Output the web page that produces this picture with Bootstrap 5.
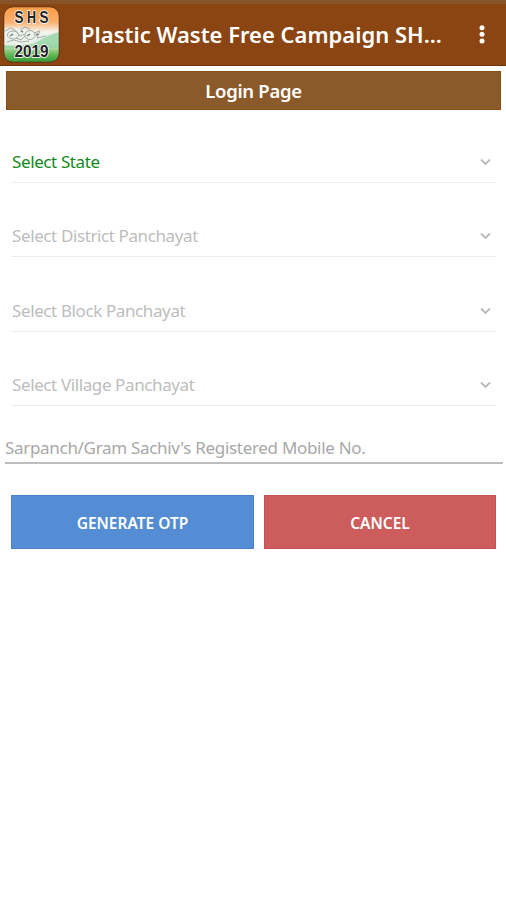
<!DOCTYPE html>
<html lang="en">
<head>
<meta charset="utf-8">
<meta name="viewport" content="width=device-width, initial-scale=1">
<title>Plastic Waste Free Campaign</title>
<link href="https://cdn.jsdelivr.net/npm/bootstrap@5.3.0/dist/css/bootstrap.min.css" rel="stylesheet">
<style>
body { font-family: "Noto Sans", "Open Sans", sans-serif; background: #fff; overflow-x: hidden; }
.app-bar { height: 66px; background: #8b4513; border-top: 4px solid #88552b; border-bottom: 1px solid #70340a; padding: 0 16px 2px 3px; }
.app-logo { width: 57px; height: 57px; margin-top: 2px; }
.app-title { font-size: 22px; font-weight: 600; line-height: 30px; margin-left: 21px; letter-spacing: 0; }
.page-head { height: 39px; margin: 5px 5px 0 6px; padding-top: 2px; background: #8b5a2b; border: 1px solid #87500f; font-size: 18.5px; font-weight: 600; letter-spacing: -.3px; }
.picker-list { margin: -2px 10px 0 11px; }
.picker { height: 74.5px; border: 0; border-bottom: 1.5px solid #ececec; background: none; color: #bdbdbd; font-size: 17px; line-height: 24px; padding: 0 4px 8px 1px; }
.picker-active { color: #128a1b; }
.picker span { letter-spacing: -.39px; }
.mobile-field { height: 58px; margin: 0 3px 0 5px; padding: 26px 0 0 0; border: 0; border-bottom: 2px solid #bdbdbd; border-radius: 0; font-size: 17px; background: none; }
.mobile-field::placeholder { color: #a8a8a8; opacity: 1; letter-spacing: -.31px; }
.actions { margin: 31px 10px 0 11px; gap: 10px; }
.act { height: 54px; border-radius: 0; color: #fff; font-size: 15.5px; font-weight: 600; padding: 3px 0 0; }
.act-otp { width: 243px; background: #548dd4; border: 1px solid #4a82cc; }
.act-cancel { background: #cd5c5c; border: 1px solid #c75252; }
</style>
</head>
<body>
<header class="app-bar d-flex align-items-center text-white">
  <svg class="app-logo flex-shrink-0" viewBox="0 0 57 57" aria-label="SHS 2019">
    <defs>
      <linearGradient id="flag" x1="0" y1="0" x2="0" y2="1">
        <stop offset="0" stop-color="#ff9b42"/><stop offset=".28" stop-color="#fbb070"/>
        <stop offset=".45" stop-color="#f5f3ec"/><stop offset=".65" stop-color="#e4f2e0"/>
        <stop offset=".85" stop-color="#65b957"/><stop offset="1" stop-color="#2d9635"/>
      </linearGradient>
      <clipPath id="tile"><rect x="1" y="1" width="55" height="55" rx="9"/></clipPath>
    </defs>
    <g clip-path="url(#tile)">
      <rect width="57" height="57" fill="url(#flag)"/>
      <path d="M0 39Q17 42 31 35Q42 28 57 26V42H0Z" fill="#8bd1a0" opacity=".75"/>
      <path d="M0 23Q15 19 28 25T57 25L43 31L30 38L0 39Z" fill="#edf1ec" opacity=".85"/>
      <g fill="none" stroke="#a3ada7" stroke-width="1">
        <ellipse cx="10" cy="29" rx="5.5" ry="4"/><ellipse cx="27" cy="29" rx="5" ry="4.5"/>
        <path d="M2 25l6-3 5 3 4 5 5-2M17 24l5-3 5 2M31 27l6-2-3 7 9-2M4 36l7-2 7 2 8-1M13 32l5 2 4-4"/>
      </g>
      <path d="M7 30l3-2M24 30l3-2M33 29l2-1M18 25l2 1" stroke="#707c76" stroke-width="1.5"/>
    </g>
    <rect x=".8" y=".8" width="55.4" height="55.4" rx="9" fill="none" stroke="#5b3519" stroke-width=".9"/>
    <g font-family="Liberation Sans, sans-serif" font-weight="700" fill="#222" stroke="#fff" stroke-width="1.6" paint-order="stroke" text-anchor="middle">
      <text x="16" y="17" font-size="16" textLength="9" lengthAdjust="spacingAndGlyphs">S</text>
      <text x="28.5" y="17" font-size="16" textLength="9" lengthAdjust="spacingAndGlyphs">H</text>
      <text x="41" y="17" font-size="16" textLength="9" lengthAdjust="spacingAndGlyphs">S</text>
      <text x="28.5" y="50.5" font-size="16" textLength="34" lengthAdjust="spacingAndGlyphs">2019</text>
    </g>
  </svg>
  <h1 class="app-title mb-0 text-nowrap">Plastic Waste Free Campaign SH...</h1>
  <svg class="ms-auto flex-shrink-0" width="16" height="24" viewBox="0 0 16 24" fill="#fff" aria-label="Menu"><circle cx="8" cy="5.7" r="2.5"/><circle cx="8" cy="12.3" r="2.5"/><circle cx="8" cy="19" r="2.5"/></svg>
</header>
<main>
  <h2 class="page-head d-flex align-items-center justify-content-center text-white mb-0"><span>Login Page</span></h2>
  <div class="picker-list d-flex flex-column">
    <button class="picker picker-active d-flex align-items-end justify-content-between" type="button"><span>Select State</span><svg width="14" height="24" viewBox="0 0 14 24" fill="none" stroke="#b9b9b9" stroke-width="1.8"><path d="M3 9.5l4.5 4.5L12 9.5"/></svg></button>
    <button class="picker d-flex align-items-end justify-content-between" type="button"><span>Select District Panchayat</span><svg width="14" height="24" viewBox="0 0 14 24" fill="none" stroke="#b9b9b9" stroke-width="1.8"><path d="M3 9.5l4.5 4.5L12 9.5"/></svg></button>
    <button class="picker d-flex align-items-end justify-content-between" type="button"><span>Select Block Panchayat</span><svg width="14" height="24" viewBox="0 0 14 24" fill="none" stroke="#b9b9b9" stroke-width="1.8"><path d="M3 9.5l4.5 4.5L12 9.5"/></svg></button>
    <button class="picker d-flex align-items-end justify-content-between" type="button"><span>Select Village Panchayat</span><svg width="14" height="24" viewBox="0 0 14 24" fill="none" stroke="#b9b9b9" stroke-width="1.8"><path d="M3 9.5l4.5 4.5L12 9.5"/></svg></button>
  </div>
  <div class="d-flex"><input class="mobile-field flex-grow-1" type="tel" placeholder="Sarpanch/Gram Sachiv's Registered Mobile No."></div>
  <div class="actions d-flex">
    <button class="btn act act-otp" type="button">GENERATE OTP</button>
    <button class="btn act act-cancel flex-grow-1" type="button">CANCEL</button>
  </div>
</main>
<script src="https://cdn.jsdelivr.net/npm/bootstrap@5.3.0/dist/js/bootstrap.bundle.min.js"></script>
</body>
</html>
